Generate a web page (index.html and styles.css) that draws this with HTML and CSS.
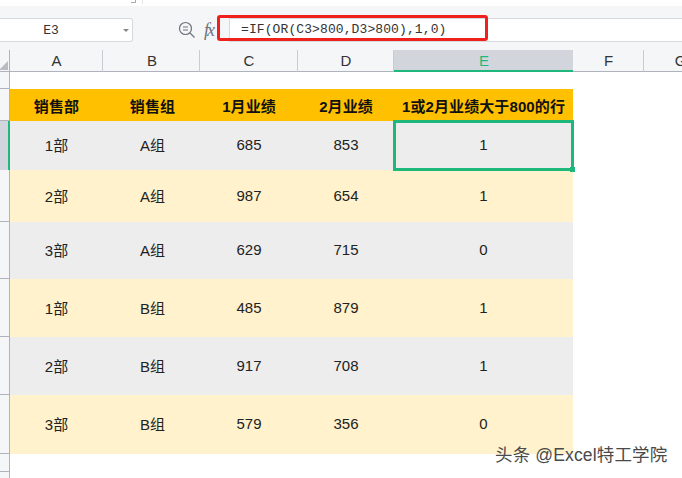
FILE: index.html
```html
<!DOCTYPE html>
<html lang="zh">
<head>
<meta charset="utf-8">
<title>Sheet</title>
<link rel="stylesheet" href="styles.css">
</head>
<body>
<div class="app">
  <div class="ribbon-edge"><span class="launcher"></span><span class="ribbon-sep"></span></div>
  <div class="formula-row">
    <div class="namebox"><span class="namebox-text">E3</span><span class="caret"></span></div>
    <div class="tools">
      <svg class="zoom-icon" width="18" height="18" viewBox="0 0 18 18" fill="none" stroke="#6f7379" stroke-width="1.2"><circle cx="7.5" cy="7.5" r="6"/><path d="M5 6h5M5 9h5M12 12l4.5 4.5"/></svg>
      <span class="fx">fx</span>
    </div>
    <div class="formula-input">=IF(OR(C3&gt;800,D3&gt;800),1,0)</div>
    <div class="red-box"></div>
  </div>
  <div class="sheet">
    <div class="corner"><span class="corner-tri"></span></div>
    <div class="ch">A</div><div class="ch col-b">B</div><div class="ch">C</div><div class="ch">D</div><div class="ch ch-active">E</div><div class="ch">F</div><div class="ch ch-last">G</div>

    <div class="rh"></div><div class="blank span7"></div>

    <div class="rh"></div>
    <div class="c head">销售部</div><div class="c head col-b">销售组</div><div class="c head">1月业绩</div><div class="c head">2月业绩</div><div class="c head">1或2月业绩大于800的行</div><div class="blank span2"></div>

    <div class="rh rh-active"></div>
    <div class="c grey">1部</div><div class="c grey col-b">A组</div><div class="c grey">685</div><div class="c grey">853</div><div class="c grey selected">1<span class="handle"></span></div><div class="blank span2"></div>

    <div class="rh"></div>
    <div class="c cream">2部</div><div class="c cream col-b">A组</div><div class="c cream">987</div><div class="c cream">654</div><div class="c cream">1</div><div class="blank span2"></div>

    <div class="rh"></div>
    <div class="c grey">3部</div><div class="c grey col-b">A组</div><div class="c grey">629</div><div class="c grey">715</div><div class="c grey">0</div><div class="blank span2"></div>

    <div class="rh"></div>
    <div class="c cream">1部</div><div class="c cream col-b">B组</div><div class="c cream">485</div><div class="c cream">879</div><div class="c cream">1</div><div class="blank span2"></div>

    <div class="rh"></div>
    <div class="c grey">2部</div><div class="c grey col-b">B组</div><div class="c grey">917</div><div class="c grey">708</div><div class="c grey">1</div><div class="blank span2"></div>

    <div class="rh"></div>
    <div class="c cream">3部</div><div class="c cream col-b">B组</div><div class="c cream">579</div><div class="c cream">356</div><div class="c cream">0</div><div class="blank span2"></div>

    <div class="rh"></div><div class="blank span7"></div>
    <div class="rh"></div><div class="blank span7"></div>
  </div>
  <div class="watermark">头条 @Excel特工学院</div>
</div>
</body>
</html>
```
FILE: styles.css
```css
* { box-sizing: border-box; }
html, body { margin: 0; padding: 0; }
body { width: 682px; height: 478px; overflow: hidden; background: #fff; }
.app {
  position: relative;
  width: 682px;
  height: 478px;
  overflow: hidden;
  font-family: "Liberation Sans", "Noto Sans CJK SC", sans-serif;
  color: #222;
}
.ribbon-edge {
  height: 6px;
  background: #fff;
  box-shadow: 0 1px 5px rgba(0, 0, 0, .16);
  display: flex;
  justify-content: flex-end;
  padding-right: 539px;
  position: relative;
}
.launcher { width: 5px; height: 3px; border-right: 1px solid #aaa; border-bottom: 1px solid #aaa; }
.ribbon-sep { width: 1px; height: 4px; background: #e4e4e4; margin-left: 6px; }
.formula-row {
  position: relative;
  height: 44px;
  padding-top: 12px;
  background: #f5f6f8;
  display: flex;
  align-items: flex-start;
}
.namebox {
  width: 133px;
  height: 24px;
  background: #fff;
  border: 1px solid #d8d9dc;
  border-left: 0;
  border-radius: 0 3px 3px 0;
  display: flex;
  align-items: center;
  font: 13px "Liberation Mono", monospace;
  color: #333;
}
.namebox-text { flex: 1; text-align: center; padding-right: 21px; }
.caret {
  width: 0;
  height: 0;
  margin-right: 3px;
  border: 3px solid transparent;
  border-top: 3px solid #888;
  border-bottom: 0;
}
.tools { width: 96px; height: 24px; display: flex; align-items: center; padding-left: 45px; gap: 8px; flex: none; }
.zoom-icon { flex: none; }
.fx { font: italic 18px "Liberation Serif", serif; color: #6f7379; letter-spacing: -2px; }
.formula-input {
  flex: 1;
  height: 24px;
  background: #fff;
  border-top: 1px solid #d8d9dc;
  border-bottom: 1px solid #d8d9dc;
  border-left: 1px solid #d8d9dc;
  padding-left: 11px;
  font: 13px/22px "Liberation Mono", monospace;
  color: #333;
  letter-spacing: .1px;
}
.red-box {
  position: absolute;
  left: 217px;
  top: 9px;
  width: 271px;
  height: 26px;
  border: 3px solid #f0201c;
  border-radius: 3px;
}
.sheet {
  display: grid;
  grid-template-columns: 10px 93px 97px 98px 96px 179px 71px 72px;
  grid-template-rows: 22px 17px 32px 49px 52px 57px 58px 58px 59px 18px 10px;
  font-size: 15px;
}
.corner { background: #f5f6f8; border-bottom: 1px solid #aeb3bd; border-right: 1px solid #aeb3bd; position: relative; overflow: hidden; }
.corner-tri {
  position: absolute; right: 1px; bottom: 1px; width: 0; height: 0;
  border-left: 9px solid transparent;
  border-bottom: 9px solid #b9bcc2;
}
.ch {
  background: #f5f6f8;
  border-bottom: 1px solid #aeb3bd;
  border-right: 1px solid #c9ccd3;
  display: flex; align-items: center; justify-content: center;
  font-size: 15px;
  color: #333;
  padding-left: 1px;
}
.ch-active { background: #d2d5dc; color: #1fb87c; border-right: 0; border-bottom: 2px solid #1fb87c; }
.ch-last { border-right: 0; }
.rh { background: #f5f6f8; border-right: 1px solid #aeb3bd; border-bottom: 1px solid #aeb3bd; }
.rh-active { background: #d2d5dc; border-right: 2px solid #1fb87c; border-bottom: 0; }
.blank { background: #fff; }
.span7 { grid-column: span 7; }
.span2 { grid-column: span 2; }
.c { display: flex; align-items: center; justify-content: center; color: #222; padding-bottom: 2px; }
.head { background: #ffc000; font-weight: 700; color: #111; padding-top: 1px; padding-bottom: 0; letter-spacing: .1px; }
.grey { background: #ededed; }
.cream { background: #fff2cc; }
.c.col-b, .ch.col-b { padding-left: 2px; }
.selected { position: relative; }
.selected::before {
  content: "";
  position: absolute;
  left: -1px; top: -1px; right: -1px; bottom: -1px;
  border: 3px solid #1fb87c;
}
.handle {
  position: absolute;
  right: -2px; bottom: -2px;
  width: 5px; height: 5px;
  background: #1fb87c;
}
.watermark {
  position: absolute;
  left: 495px;
  top: 445px;
  font-size: 17.5px;
  line-height: 20px;
  letter-spacing: .15px;
  color: #4a4a4a;
  white-space: nowrap;
}
```
